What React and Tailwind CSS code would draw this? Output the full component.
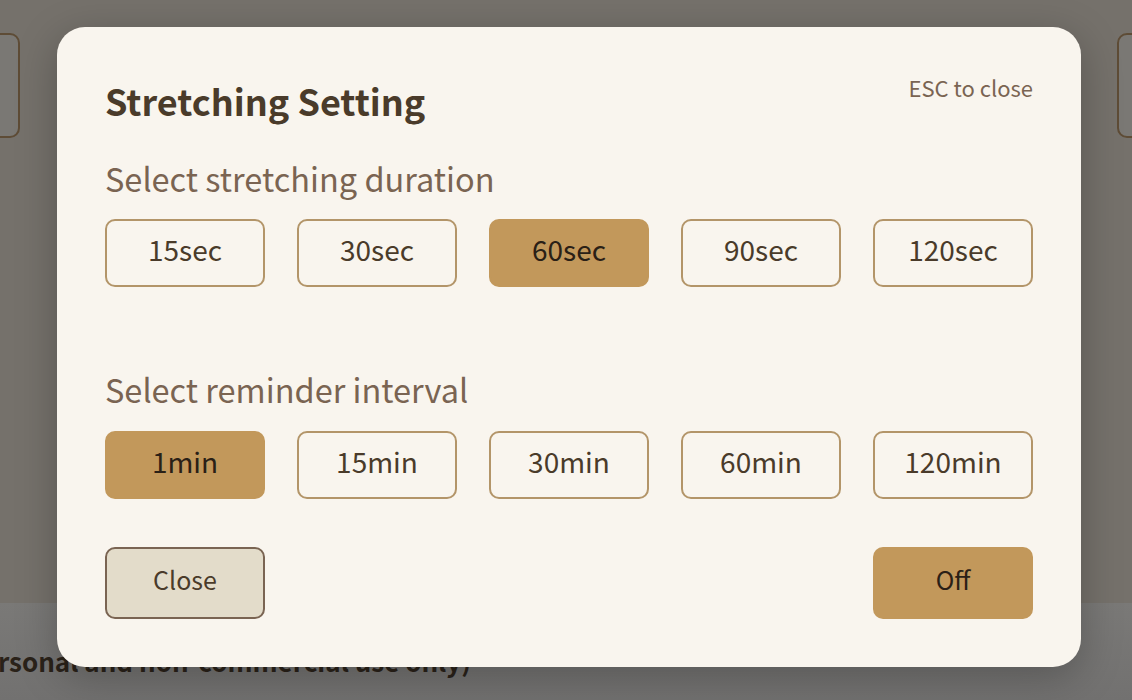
import { useState } from 'react';

const durations = ['15sec', '30sec', '60sec', '90sec', '120sec'];
const intervals = ['1min', '15min', '30min', '60min', '120min'];

function Choice({ label, active, onClick }) {
  return (
    <button
      onClick={onClick}
      className={`h-[68px] rounded-[10px] border-2 pb-2 text-[28px] ${
        active
          ? 'bg-[#c2985b] border-[#c2985b] text-[#2a2016]'
          : 'bg-transparent border-[#b39569] text-[#4a3b2a]'
      }`}
    >
      {label}
    </button>
  );
}

export default function App() {
  const [duration, setDuration] = useState('60sec');
  const [interval, setInterval] = useState('1min');

  return (
    <div
      className="relative h-[700px] w-[1132px] overflow-hidden bg-[#75716b]"
      style={{ fontFamily: '"Noto Sans CJK KR", "Noto Sans", sans-serif' }}
    >
      {/* page behind the dimmed overlay */}
      <div className="flex h-[603px] flex-col">
        <div className="mt-[33px] flex justify-between">
          <div className="-ml-[40px] h-[105px] w-[60px] rounded-[10px] border-2 border-[#5e4c36] bg-[#7a7874]" />
          <div className="-mr-[40px] h-[105px] w-[55px] rounded-[10px] border-2 border-[#5e4c36] bg-[#7a7874]" />
        </div>
      </div>
      <div className="h-[97px] bg-gradient-to-b from-[#7a7977] to-[#727170] pt-[38px]">
        <p className="-ml-[92px] whitespace-nowrap text-[26px] font-bold text-[#2a2219]">
          (For personal and non-commercial use only)
        </p>
      </div>

      {/* modal */}
      <div className="absolute left-[57px] top-[27px] flex h-[640px] w-[1024px] flex-col rounded-[28px] bg-[#f9f5ee] p-12 shadow-[0_10px_40px_rgba(0,0,0,0.25)]">
        <div className="flex h-[50px] items-start justify-between">
          <h1 className="text-[36px] font-bold leading-[50px] text-[#4a3b2a]">Stretching Setting</h1>
          <span className="text-[22px] leading-[24px] text-[#7a6452]">ESC to close</span>
        </div>

        <p className="mt-[31px] text-[32.5px] leading-[44px] text-[#7a6452]">Select stretching duration</p>
        <div className="mt-[19px] grid grid-cols-5 gap-8">
          {durations.map((d) => (
            <Choice key={d} label={d} active={duration === d} onClick={() => setDuration(d)} />
          ))}
        </div>

        <p className="mt-[80px] text-[32.5px] leading-[44px] text-[#7a6452]">Select reminder interval</p>
        <div className="mt-[20px] grid grid-cols-5 gap-8">
          {intervals.map((d) => (
            <Choice key={d} label={d} active={interval === d} onClick={() => setInterval(d)} />
          ))}
        </div>

        <div className="mt-[48px] flex justify-between">
          <button className="h-[72px] w-[160px] rounded-[10px] border-2 border-[#7a6452] bg-[#e3dcca] pb-[6px] text-[25px] text-[#4a3b2a]">
            Close
          </button>
          <button className="h-[72px] w-[160px] rounded-[10px] bg-[#c2985b] pb-[6px] text-[25px] text-[#2a2016]">
            Off
          </button>
        </div>
      </div>
    </div>
  );
}
